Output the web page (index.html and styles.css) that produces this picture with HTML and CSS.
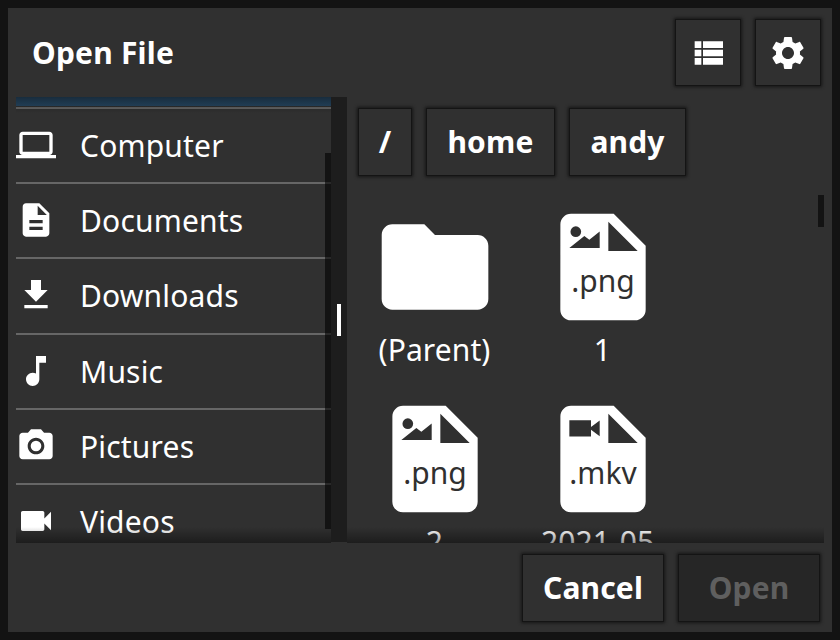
FILE: index.html
```html
<!DOCTYPE html>
<html lang="en">
<head>
<meta charset="utf-8">
<title>Open File</title>
<link rel="stylesheet" href="styles.css">
</head>
<body>
<main class="dialog">
  <header class="header">
    <h1 class="title">Open File</h1>
    <div class="tools">
      <button class="button tool" aria-label="List view"><svg class="icon" viewBox="0 0 24 24"><path d="M4 14h4v-4H4v4zm0 5h4v-4H4v4zM4 9h4V5H4v4zm5 5h12v-4H9v4zm0 5h12v-4H9v4zM9 5v4h12V5H9z"/></svg></button>
      <button class="button tool" aria-label="Settings"><svg class="icon" viewBox="0 0 24 24"><path d="M19.14,12.94c0.04-0.3,0.06-0.61,0.06-0.94c0-0.32-0.02-0.64-0.07-0.94l2.03-1.58c0.18-0.14,0.23-0.41,0.12-0.61l-1.92-3.32c-0.12-0.22-0.37-0.29-0.59-0.22l-2.39,0.96c-0.5-0.38-1.03-0.7-1.62-0.94L14.4,2.81c-0.04-0.24-0.24-0.41-0.48-0.41h-3.84c-0.24,0-0.43,0.17-0.47,0.41L9.25,5.35C8.66,5.59,8.12,5.92,7.63,6.29L5.24,5.33c-0.22-0.08-0.47,0-0.59,0.22L2.74,8.87C2.62,9.08,2.66,9.34,2.86,9.48l2.03,1.58C4.84,11.36,4.8,11.69,4.8,12s0.02,0.64,0.07,0.94l-2.03,1.58c-0.18,0.14-0.23,0.41-0.12,0.61l1.92,3.32c0.12,0.22,0.37,0.29,0.59,0.22l2.39-0.96c0.5,0.38,1.03,0.7,1.62,0.94l0.36,2.54c0.05,0.24,0.24,0.41,0.48,0.41h3.84c0.24,0,0.44-0.17,0.47-0.41l0.36-2.54c0.59-0.24,1.13-0.56,1.62-0.94l2.39,0.96c0.22,0.08,0.47,0,0.59-0.22l1.92-3.32c0.12-0.22,0.07-0.47-0.12-0.61L19.14,12.94z M12,15.6c-1.98,0-3.6-1.62-3.6-3.6s1.62-3.6,3.6-3.6s3.6,1.62,3.6,3.6S13.98,15.6,12,15.6z"/></svg></button>
    </div>
  </header>

  <div class="body">
    <nav class="places">
      <div class="selected-row"></div>
      <ul class="place-list">
        <li class="place"><svg class="icon" viewBox="0 0 24 24"><path d="M20 18c1.1 0 1.99-.9 1.99-2L22 6c0-1.1-.9-2-2-2H4c-1.1 0-2 .9-2 2v10c0 1.1.9 2 2 2H0v2h24v-2h-4zM4 6h16v10H4V6z"/></svg><span>Computer</span></li>
        <li class="place"><svg class="icon" viewBox="0 0 24 24"><path d="M14 2H6c-1.1 0-1.99.9-1.99 2L4 20c0 1.1.89 2 1.99 2H18c1.1 0 2-.9 2-2V8l-6-6zm2 16H8v-2h8v2zm0-4H8v-2h8v2zm-3-5V3.5L18.5 9H13z"/></svg><span>Documents</span></li>
        <li class="place"><svg class="icon" viewBox="0 0 24 24"><path d="M19 9h-4V3H9v6H5l7 7 7-7zM5 18v2h14v-2H5z"/></svg><span>Downloads</span></li>
        <li class="place"><svg class="icon" viewBox="0 0 24 24"><path d="M12 3v10.55c-.59-.34-1.27-.55-2-.55-2.21 0-4 1.79-4 4s1.79 4 4 4 4-1.790 4-4V7h4V3h-6z"/></svg><span>Music</span></li>
        <li class="place"><svg class="icon" viewBox="0 0 24 24"><circle cx="12" cy="12" r="3.2"/><path d="M9 2L7.170 4H4c-1.1 0-2 .9-2 2v12c0 1.1.9 2 2 2h16c1.1 0 2-.9 2-2V6c0-1.1-.9-2-2-2h-3.170L15 2H9zm3 15c-2.760 0-5-2.240-5-5s2.240-5 5-5 5 2.240 5 5-2.240 5-5 5z"/></svg><span>Pictures</span></li>
        <li class="place"><svg class="icon" viewBox="0 0 24 24"><path d="M17 10.5V7c0-.55-.45-1-1-1H4c-.55 0-1 .45-1 1v10c0 .55.45 1 1 1h12c.55 0 1-.45 1-1v-3.5l4 4v-11l-4 4z"/></svg><span>Videos</span></li>
      </ul>
      <div class="scrollbar places-scrollbar"></div>
    </nav>

    <div class="splitter"><div class="grip"></div></div>

    <section class="browser">
      <div class="path">
        <button class="button crumb crumb-root">/</button>
        <button class="button crumb crumb-home">home</button>
        <button class="button crumb crumb-user">andy</button>
      </div>
      <div class="files">
        <div class="file">
          <div class="thumb"><svg class="thumb-icon" viewBox="0 0 24 24"><path d="M10 4H4c-1.1 0-1.99.9-1.99 2L2 18c0 1.1.9 2 2 2h16c1.1 0 2-.9 2-2V8c0-1.1-.9-2-2-2h-8l-2-2z"/></svg></div>
          <div class="name">(Parent)</div>
        </div>
        <div class="file">
          <div class="thumb"><svg class="thumb-icon" viewBox="0 0 24 24"><path d="M6 2c-1.1 0-1.990.9-1.990 2L4 20c0 1.1.89 2 1.990 2H18c1.1 0 2-.9 2-2V8l-6-6H6zm7 7V3.500L18.500 9H13z"/><g class="mark"><circle cx="6.9" cy="5.38" r="1"/><path d="M5.69 8.440L8.500 6.190L9.440 6.870L11.380 5.340V8.440z"/></g></svg><span class="ext">.png</span></div>
          <div class="name">1</div>
        </div>
        <div class="file">
          <div class="thumb"><svg class="thumb-icon" viewBox="0 0 24 24"><path d="M6 2c-1.1 0-1.990.9-1.990 2L4 20c0 1.1.89 2 1.990 2H18c1.1 0 2-.9 2-2V8l-6-6H6zm7 7V3.500L18.500 9H13z"/><g class="mark"><circle cx="6.9" cy="5.38" r="1"/><path d="M5.69 8.440L8.500 6.190L9.440 6.870L11.380 5.340V8.440z"/></g></svg><span class="ext">.png</span></div>
          <div class="name">2</div>
        </div>
        <div class="file">
          <div class="thumb"><svg class="thumb-icon" viewBox="0 0 24 24"><path d="M6 2c-1.1 0-1.990.9-1.990 2L4 20c0 1.1.89 2 1.990 2H18c1.1 0 2-.9 2-2V8l-6-6H6zm7 7V3.500L18.500 9H13z"/><g class="mark"><path d="M5.690 4.750H9.750V6L11.380 4.800V7.750L9.750 6.500V7.780H5.690z"/></g></svg><span class="ext">.mkv</span></div>
          <div class="name">2021-05-</div>
        </div>
        <div class="scrollbar files-scrollbar"></div>
      </div>
    </section>
  </div>

  <footer class="footer">
    <button class="button action">Cancel</button>
    <button class="button action" disabled>Open</button>
  </footer>
</main>
</body>
</html>
```
FILE: styles.css
```css
* {
  box-sizing: border-box;
}

body {
  margin: 0;
  height: 640px;
  padding: 8px;
  overflow: hidden;
  background: #131313;
  color: #fff;
  font: 30px/41px "Noto Sans", sans-serif;
}

.dialog {
  display: flex;
  flex-direction: column;
  width: 824px;
  height: 624px;
  padding: 0 8px;
  background: #303030;
}

.header {
  display: flex;
  justify-content: space-between;
  flex: 0 0 89px;
  padding: 12px 4px 0 16px;
}

.title {
  margin: 12px 0 0;
  font-size: 30px;
  font-weight: 700;
  letter-spacing: 0.2px;
}

.tools {
  display: flex;
  gap: 16px;
}

.button {
  display: flex;
  align-items: center;
  justify-content: center;
  height: 65px;
  margin: 0;
  padding: 0;
  border: 0;
  background: #303030;
  box-shadow: 0 0 0 1px #141414, 0 0 3px 2px #161616;
  color: #fff;
  font: inherit;
  font-weight: 700;
}

.button:disabled {
  background: #262626;
  color: #5f5f5f;
}

.tool {
  width: 64px;
}

.icon {
  display: block;
  flex: none;
  width: 40px;
  height: 40px;
  fill: currentColor;
}

.body {
  display: flex;
  flex: 0 0 446px;
}

.places {
  position: relative;
  width: 315px;
  height: 446px;
  overflow: hidden;
}

.places::after,
.files::after {
  content: "";
  position: absolute;
  left: 0;
  right: 0;
  bottom: 0;
  height: 16px;
  background: linear-gradient(transparent, rgba(0, 0, 0, 0.4));
}

.places::before {
  content: "";
  position: absolute;
  left: 0;
  right: 0;
  top: 0;
  height: 16px;
  background: linear-gradient(rgba(0, 0, 0, 0.4), transparent);
}

.selected-row {
  height: 9px;
  margin-bottom: 1px;
  background: #284a66;
}

.place-list {
  margin: 0;
  padding: 0;
  list-style: none;
}

.place {
  display: flex;
  gap: 24px;
  height: 75.2px;
  padding-top: 16px;
  border-top: 2px solid #666;
}

.place span {
  letter-spacing: 0.18px;
}

.scrollbar {
  position: absolute;
  right: 0;
  width: 6px;
  background: rgba(0, 0, 0, 0.6);
}

.places-scrollbar {
  top: 56px;
  height: 376px;
}

.splitter {
  display: flex;
  align-items: center;
  justify-content: center;
  width: 16px;
  height: 445px;
  background: #1d1d1d;
}

.grip {
  width: 4px;
  height: 32px;
  background: #fff;
}

.browser {
  display: flex;
  flex: 1;
  flex-direction: column;
}

.path {
  display: flex;
  flex: 0 0 98px;
  gap: 16px;
  padding: 12px 0 0 12px;
}

.crumb {
  height: 66px;
  padding-bottom: 2px;
}

.crumb-root {
  width: 52px;
}

.crumb-home {
  width: 127px;
  letter-spacing: 0.2px;
}

.crumb-user {
  width: 115px;
  letter-spacing: 0.1px;
}

.files {
  position: relative;
  display: grid;
  grid-template-columns: 168px 168px;
  grid-auto-rows: 192px;
  height: 348px;
  padding: 7.7px 0 0 4px;
  overflow: hidden;
}

.file {
  display: flex;
  flex-direction: column;
  align-items: center;
}

.thumb {
  display: grid;
  place-items: center;
  height: 126px;
}

.thumb-icon,
.ext {
  grid-area: 1 / 1;
}

.thumb-icon {
  display: block;
  width: 128px;
  height: 128px;
  fill: #fff;
}

.mark {
  fill: #303030;
}

.ext {
  margin-top: 27px;
  color: #303030;
}

.name {
  margin-right: 1px;
  letter-spacing: 0.1px;
}

.files-scrollbar {
  top: 0;
  height: 32px;
}

.footer {
  display: flex;
  justify-content: flex-end;
  gap: 16px;
  padding: 12px 5px 0 0;
}

.action {
  width: 140px;
  height: 66px;
  padding-bottom: 2px;
  letter-spacing: 0.15px;
}
```
